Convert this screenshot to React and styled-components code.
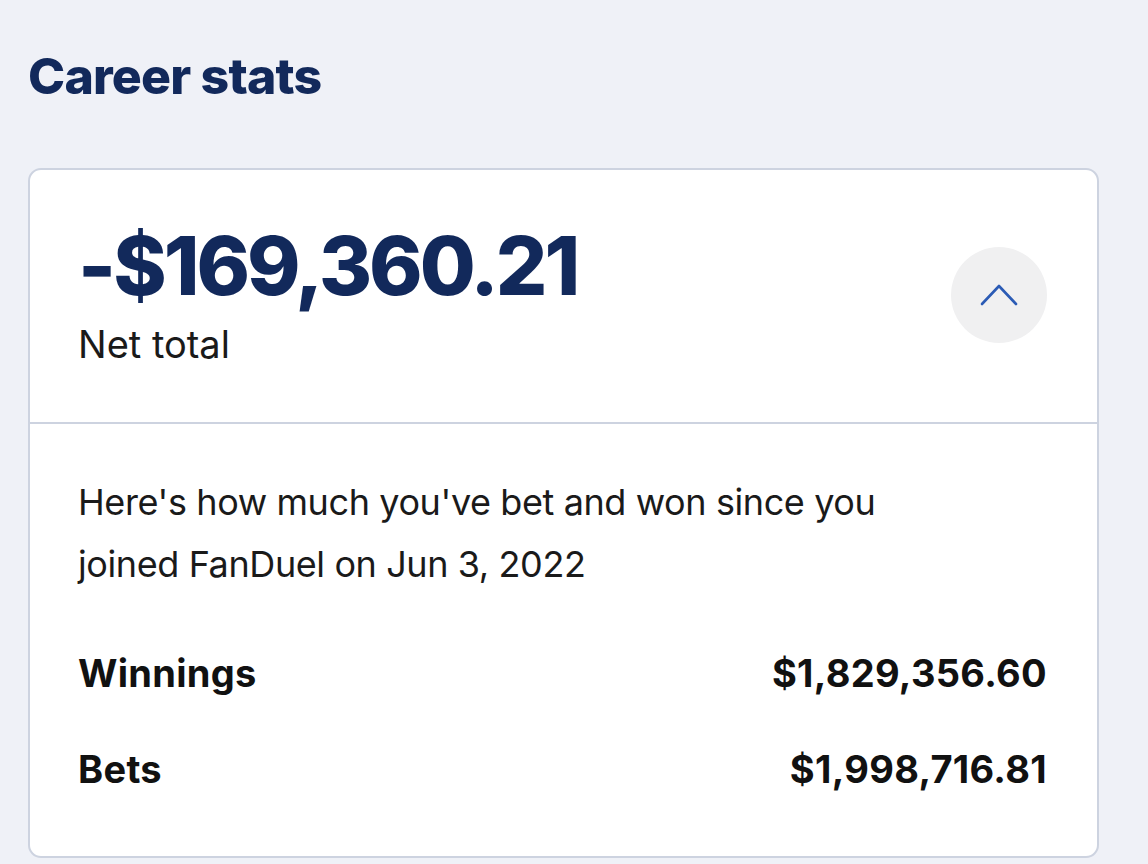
import React, { useState } from "react";
import styled, { createGlobalStyle } from "styled-components";

const Global = createGlobalStyle`
  html, body { margin: 0; padding: 0; }
  body {
    background: #eff1f7;
    font-family: Inter, "Open Sans", sans-serif;
  }
`;

const Page = styled.div`
  padding: 44px 0 0 28px;
  width: 1148px;
  box-sizing: border-box;
`;

const Title = styled.h2`
  margin: 0 0 60px;
  font-size: 50px;
  line-height: 64px;
  font-weight: 800;
  letter-spacing: -0.8px;
  color: #12295b;
`;

const Card = styled.div`
  width: 1071px;
  box-sizing: border-box;
  background: #fff;
  border: 2px solid #cdd3e0;
  border-radius: 13px;
  overflow: hidden;
`;

const Head = styled.div`
  display: flex;
  align-items: center;
  justify-content: space-between;
  padding: 48px 50px 56px 48px;
  border-bottom: 2px solid #cdd3e0;
`;

const Amount = styled.div`
  font-size: 81px;
  line-height: 96px;
  font-weight: 800;
  letter-spacing: -3px;
  color: #12295b;
`;

const Label = styled.div`
  margin-top: 8px;
  font-size: 38px;
  line-height: 44px;
  color: #1a1a1a;
`;

const Toggle = styled.button`
  width: 96px;
  height: 96px;
  margin-top: 6px;
  border-radius: 50%;
  border: none;
  background: #f0f0f1;
  display: flex;
  align-items: center;
  justify-content: center;
  cursor: pointer;
  padding: 0;
`;

const Body = styled.div`
  padding: 47px 50px 39px 48px;
`;

const Intro = styled.p`
  margin: 0 0 30px;
  max-width: 900px;
  font-size: 36px;
  line-height: 62px;
  letter-spacing: -0.4px;
  color: #1a1a1a;
`;

const Row = styled.div`
  display: flex;
  justify-content: space-between;
  align-items: center;
  height: 96px;
  font-size: 38px;
  font-weight: 700;
  letter-spacing: 0.3px;
  color: #111;
`;

export default function App() {
  const [open, setOpen] = useState(true);
  return (
    <Page>
      <Global />
      <Title>Career stats</Title>
      <Card>
        <Head>
          <div>
            <Amount>-$169,360.21</Amount>
            <Label>Net total</Label>
          </div>
          <Toggle onClick={() => setOpen(!open)} aria-label="toggle">
            <svg width="40" height="24" viewBox="0 0 40 24" fill="none">
              <path
                d={open ? "M3 21 L20 3 L37 21" : "M3 3 L20 21 L37 3"}
                stroke="#2b5bb5"
                strokeWidth="2.6"
                strokeLinecap="round"
                strokeLinejoin="round"
              />
            </svg>
          </Toggle>
        </Head>
        {open && (
          <Body>
            <Intro>
              Here's how much you've bet and won since you joined FanDuel on Jun 3, 2022
            </Intro>
            <Row>
              <span>Winnings</span>
              <span>$1,829,356.60</span>
            </Row>
            <Row>
              <span>Bets</span>
              <span>$1,998,716.81</span>
            </Row>
          </Body>
        )}
      </Card>
    </Page>
  );
}
